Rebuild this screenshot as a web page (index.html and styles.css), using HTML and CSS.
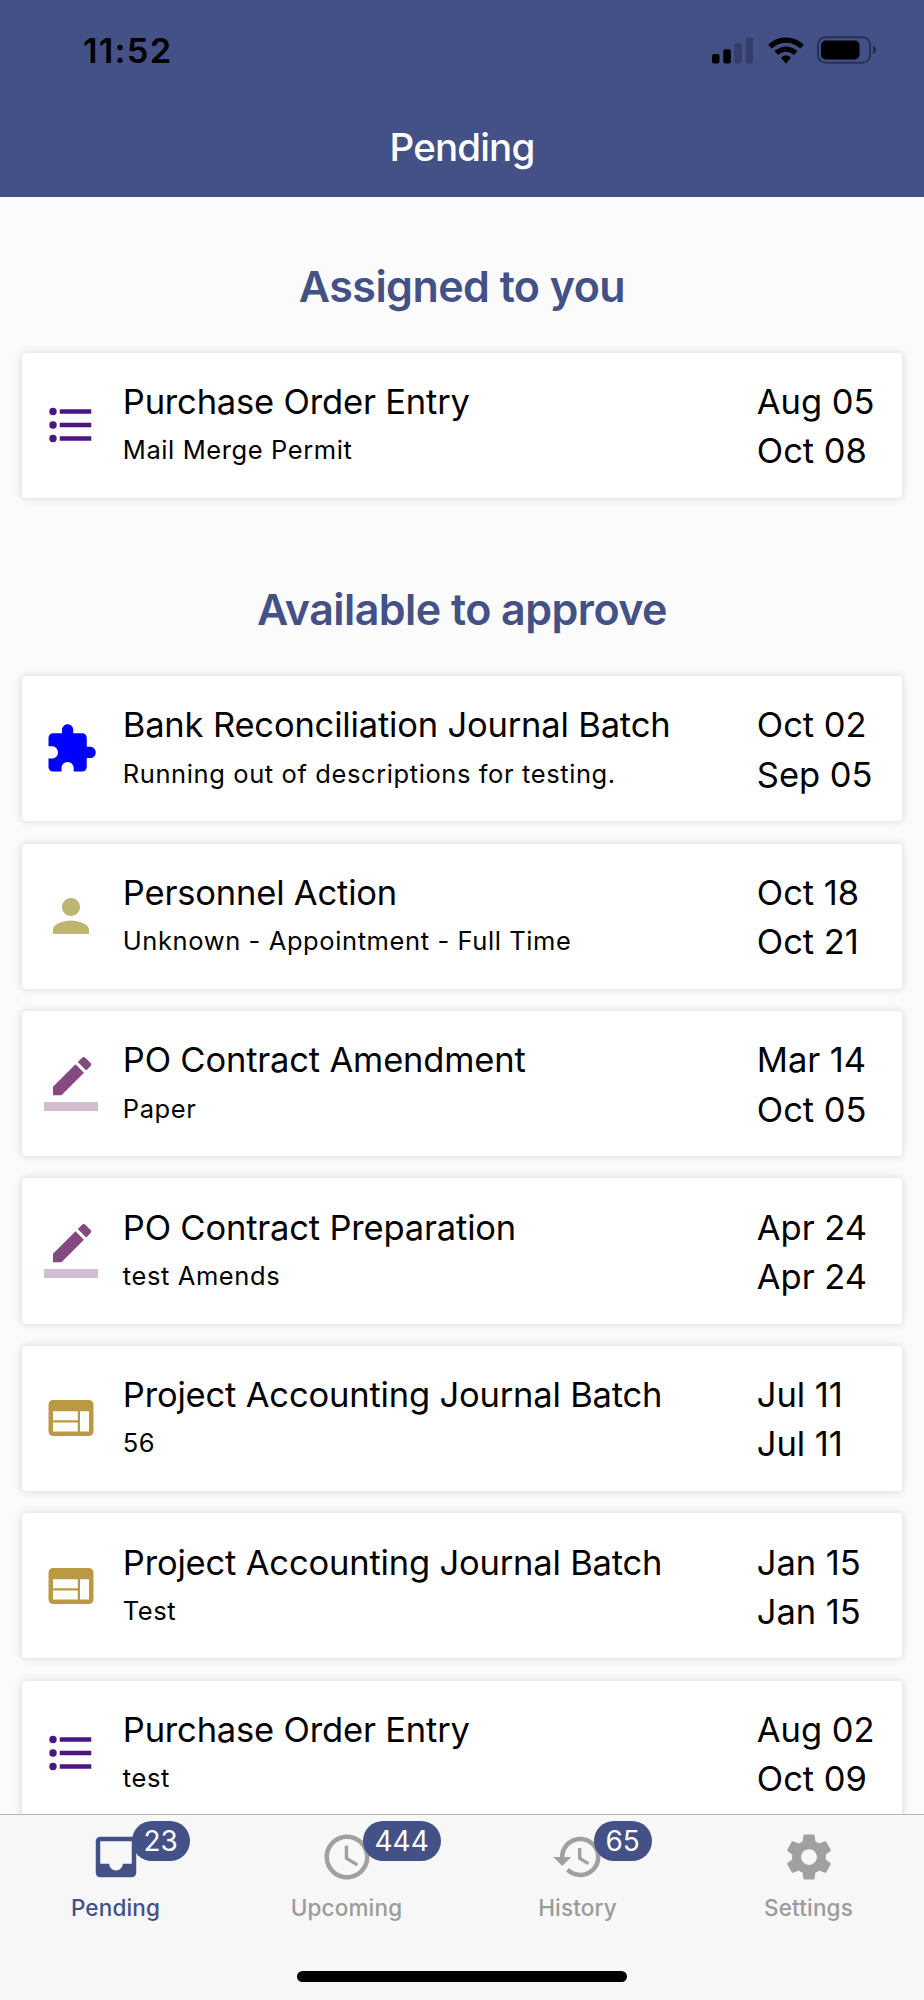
FILE: index.html
```html
<!DOCTYPE html>
<html lang="en">
<head>
<meta charset="utf-8">
<title>Pending</title>
<link rel="stylesheet" href="styles.css">
</head>
<body>
<svg class="sprite" aria-hidden="true">
  <symbol id="list" viewBox="0 0 24 24"><circle cx="4" cy="6" r="1.65"/><circle cx="4" cy="12" r="1.65"/><circle cx="4" cy="18" r="1.65"/><path d="M7 19h14v-2H7v2zm0-6h14v-2H7v2zm0-8v2h14V5H7z"/></symbol>
  <symbol id="puzzle" viewBox="0 0 24 24"><path d="M20.5 11H19V7c0-1.1-.9-2-2-2h-4V3.5C13 2.12 11.88 1 10.5 1S8 2.12 8 3.5V5H4c-1.1 0-1.99.9-1.99 2v3.8H3.5c1.49 0 2.7 1.21 2.7 2.7s-1.21 2.7-2.7 2.7H2V20c0 1.1.9 2 2 2h3.8v-1.5c0-1.49 1.21-2.7 2.7-2.7 1.49 0 2.7 1.21 2.7 2.7V22H17c1.1 0 2-.9 2-2v-4h1.5c1.38 0 2.5-1.12 2.5-2.5S21.88 11 20.5 11z"/></symbol>
  <symbol id="person" viewBox="0 0 24 24"><path d="M12 12c2.21 0 4-1.79 4-4s-1.79-4-4-4-4 1.79-4 4 1.79 4 4 4zm0 2c-2.67 0-8 1.34-8 4v2h16v-2c0-2.66-5.33-4-8-4z"/></symbol>
  <symbol id="pencil" viewBox="0 0 24 24"><path d="M17.75 7L14 3.25l-10 10V17h3.75l10-10zm2.96-2.96c.39-.39.39-1.02 0-1.41L18.37.29c-.39-.39-1.02-.39-1.41 0L15 2.25 18.75 6l1.96-1.96z"/><path fill-opacity=".36" d="M0 20h24v4H0z"/></symbol>
  <symbol id="web" viewBox="0 0 24 24"><path d="M20 4H4c-1.1 0-1.99.9-1.99 2L2 18c0 1.1.9 2 2 2h16c1.1 0 2-.9 2-2V6c0-1.1-.9-2-2-2zm-5 14H4v-4h11v4zm0-5H4V9h11v4zm5 5h-4V9h4v9z"/></symbol>
</svg>
<div class="screen">
  <header class="top">
    <div class="status">
      <span class="time">11:52</span>
      <div class="indicators">
        <svg class="signal" viewBox="0 0 41 27"><rect x="0" y="17" width="7.5" height="9.6" rx="2"/><rect x="11.3" y="12.3" width="7.5" height="14.3" rx="2"/><g opacity=".22"><rect x="22.4" y="6.3" width="7.5" height="20.3" rx="2"/><rect x="33.6" y=".5" width="7.5" height="26.1" rx="2"/></g></svg>
        <svg class="wifi" viewBox="0 0 36 27"><path d="M18 .4c6.7 0 12.8 2.6 17.3 6.8.4.4.4.9 0 1.300l-2.500 2.500c-.4.400-.9.400-1.300 0C27.900 7.700 23.200 5.700 18 5.700S8.100 7.700 4.500 11c-.4.400-.9.400-1.300 0L.7 8.500c-.4-.4-.4-.9 0-1.300C5.200 3 11.300.4 18 .4z"/><path d="M18 9.400c4.200 0 8 1.600 10.900 4.200.4.400.4.900 0 1.300l-2.600 2.500c-.4.400-.8.400-1.200.1-1.900-1.700-4.400-2.700-7.100-2.700s-5.200 1-7.100 2.700c-.4.300-.8.300-1.200-.1l-2.600-2.500c-.4-.4-.4-.9 0-1.300C10 11 13.800 9.400 18 9.400z"/><path d="M18 18.600c1.700 0 3.200.6 4.400 1.500.4.300.4.900.1 1.200l-3.800 4.800c-.4.400-1 .4-1.400 0l-3.800-4.800c-.3-.3-.3-.9.1-1.200 1.200-.9 2.700-1.500 4.400-1.500z"/></svg>
        <svg class="battery" viewBox="0 0 60 28"><rect x="1" y="1.200" width="52" height="25.600" rx="7.500" fill="none" stroke="#000" stroke-opacity=".4" stroke-width="2"/><rect x="4" y="4.600" width="38.500" height="18.800" rx="4.500"/><path opacity=".45" d="M56 9.500c1.900.8 3.100 2.500 3.100 4.500s-1.200 3.700-3.100 4.500z"/></svg>
      </div>
    </div>
    <h1 class="title">Pending</h1>
  </header>
  <main class="content">
    <h2 class="section">Assigned to you</h2>
    <div class="cards">
      <article class="card"><svg class="icon purple"><use href="#list"/></svg><div class="info"><div class="name">Purchase Order Entry</div><div class="desc">Mail Merge Permit</div></div><div class="dates"><div>Aug 05</div><div>Oct 08</div></div></article>
    </div>
    <h2 class="section">Available to approve</h2>
    <div class="cards">
      <article class="card"><svg class="icon blue"><use href="#puzzle"/></svg><div class="info"><div class="name">Bank Reconciliation Journal Batch</div><div class="desc">Running out of descriptions for testing.</div></div><div class="dates"><div>Oct 02</div><div>Sep 05</div></div></article>
      <article class="card"><svg class="icon khaki"><use href="#person"/></svg><div class="info"><div class="name">Personnel Action</div><div class="desc">Unknown - Appointment - Full Time</div></div><div class="dates"><div>Oct 18</div><div>Oct 21</div></div></article>
      <article class="card"><svg class="icon plum"><use href="#pencil"/></svg><div class="info"><div class="name">PO Contract Amendment</div><div class="desc">Paper</div></div><div class="dates"><div>Mar 14</div><div>Oct 05</div></div></article>
      <article class="card"><svg class="icon plum"><use href="#pencil"/></svg><div class="info"><div class="name">PO Contract Preparation</div><div class="desc">test Amends</div></div><div class="dates"><div>Apr 24</div><div>Apr 24</div></div></article>
      <article class="card"><svg class="icon gold"><use href="#web"/></svg><div class="info"><div class="name">Project Accounting Journal Batch</div><div class="desc">56</div></div><div class="dates"><div>Jul 11</div><div>Jul 11</div></div></article>
      <article class="card"><svg class="icon gold"><use href="#web"/></svg><div class="info"><div class="name">Project Accounting Journal Batch</div><div class="desc">Test</div></div><div class="dates"><div>Jan 15</div><div>Jan 15</div></div></article>
      <article class="card"><svg class="icon purple"><use href="#list"/></svg><div class="info"><div class="name">Purchase Order Entry</div><div class="desc">test</div></div><div class="dates"><div>Aug 02</div><div>Oct 09</div></div></article>
    </div>
  </main>
  <footer class="bottom">
    <nav class="tabs">
      <a class="tab active"><span class="glyph"><svg viewBox="0 0 24 24"><path d="M19 3H4.990c-1.110 0-1.980.89-1.980 2L3 19c0 1.100.88 2 1.990 2H19c1.100 0 2-.9 2-2V5c0-1.110-.9-2-2-2zm0 12h-4c0 1.660-1.350 3-3 3s-3-1.340-3-3H4.990V5H19v10z"/></svg><b class="badge">23</b></span><span class="label">Pending</span></a>
      <a class="tab"><span class="glyph"><svg viewBox="0 0 24 24"><path d="M11.990 2C6.470 2 2 6.480 2 12s4.470 10 9.990 10C17.520 22 22 17.520 22 12S17.520 2 11.990 2zM12 20c-4.420 0-8-3.580-8-8s3.580-8 8-8 8 3.580 8 8-3.580 8-8 8zm.5-13H11v6l5.250 3.150.75-1.230-4.500-2.670z"/></svg><b class="badge">444</b></span><span class="label">Upcoming</span></a>
      <a class="tab"><span class="glyph"><svg viewBox="0 0 24 24"><path d="M13 3c-4.970 0-9 4.030-9 9H1l3.890 3.890.07.14L9 12H6c0-3.870 3.130-7 7-7s7 3.130 7 7-3.130 7-7 7c-1.930 0-3.680-.79-4.940-2.060l-1.420 1.420C8.270 19.990 10.510 21 13 21c4.970 0 9-4.030 9-9s-4.030-9-9-9zm-1 5v5l4.280 2.540.72-1.210-3.500-2.080V8H12z"/></svg><b class="badge">65</b></span><span class="label">History</span></a>
      <a class="tab"><span class="glyph"><svg viewBox="0 0 24 24"><path d="M19.430 12.980c.04-.32.07-.64.07-.98s-.03-.66-.07-.98l2.110-1.650c.19-.15.24-.42.12-.64l-2-3.460c-.12-.22-.39-.3-.61-.22l-2.490 1c-.52-.4-1.080-.73-1.690-.98l-.38-2.650C14.460 2.180 14.250 2 14 2h-4c-.25 0-.46.18-.49.42l-.38 2.650c-.61.25-1.170.59-1.690.98l-2.490-1c-.23-.09-.49 0-.61.22l-2 3.460c-.13.22-.07.49.12.64l2.110 1.650c-.04.32-.07.65-.07.98s.03.66.07.98l-2.110 1.650c-.19.15-.24.42-.12.64l2 3.460c.12.22.39.3.61.22l2.490-1c.52.4 1.080.73 1.690.98l.38 2.650c.03.24.24.42.49.42h4c.25 0 .46-.18.49-.42l.38-2.650c.61-.25 1.170-.59 1.690-.98l2.490 1c.23.09.49 0 .61-.22l2-3.460c.12-.22.07-.49-.12-.64l-2.110-1.650zM12 15.500c-1.930 0-3.500-1.570-3.500-3.500s1.570-3.500 3.500-3.500 3.500 1.570 3.500 3.500-1.570 3.500-3.500 3.500z"/></svg></span><span class="label">Settings</span></a>
    </nav>
    <div class="home"></div>
  </footer>
</div>
</body>
</html>
```
FILE: styles.css
```css
* { box-sizing: border-box; }
body { margin: 0; font-family: Inter, "Liberation Sans", sans-serif; color: #000; }
.sprite { display: none; }
.screen { width: 924px; height: 2000px; display: flex; flex-direction: column; overflow: hidden; background: #fbfbfb; }
.top { flex: none; height: 196.5px; background: #435186; }
.status { display: flex; justify-content: space-between; align-items: center; height: 100px; padding: 0 47.500px 0 83px; }
.time { font-size: 34.500px; font-weight: 600; line-height: 42px; margin-top: 2px; letter-spacing: 1.200px; }
.indicators { display: flex; align-items: center; }
.signal { width: 41px; height: 27px; margin-right: 14.500px; }
.wifi { width: 36px; height: 27px; margin-right: 13px; }
.battery { width: 60px; height: 28px; }
.title { margin: 0; color: #fff; font-size: 38.500px; font-weight: 500; line-height: 48px; margin-top: 23px; text-align: center; letter-spacing: -.85px; }
.content { flex: 1; min-height: 0; overflow: hidden; }
.section { margin: 0; height: 156px; padding-top: 58px; color: #435186; text-align: center; font-size: 43px; font-weight: 600; line-height: 62px; letter-spacing: -.55px; }
.cards + .section { height: 178.500px; padding-top: 80.500px; }
.cards { display: flex; flex-direction: column; gap: 22.350px; padding: 0 22.200px; }
.card { flex: none; height: 145.100px; display: flex; align-items: center; background: #fff; border-radius: 4px; padding: 0 0 0 22.200px; box-shadow: 0 0 8px rgba(0, 0, 0, .16); }
.icon { flex: none; width: 54px; height: 54px; fill: currentColor; }
.purple { color: #4b1584; }
.blue { color: #0000fe; }
.khaki { color: #bdb572; }
.plum { color: #834980; }
.gold { color: #b99a42; }
.info { flex: 1; margin-left: 24.400px; padding-top: 2px; white-space: nowrap; }
.name { font-size: 34.500px; line-height: 49.300px; letter-spacing: -.17px; }
.desc { font-size: 25.500px; line-height: 47.300px; height: 49.300px; letter-spacing: .6px; }
.dates { width: 145px; padding-top: 2px; font-size: 34.500px; line-height: 49.300px; white-space: nowrap; }
.dates div { letter-spacing: -.05px; }
.bottom { flex: none; height: 186px; border-top: 1.500px solid #b9b9bb; background: #f7f7f7; display: flex; flex-direction: column; align-items: center; }
.tabs { display: flex; width: 100%; height: 156px; }
.tab { flex: 1; display: flex; flex-direction: column; align-items: center; padding-top: 15px; color: #9b9b9b; }
.glyph { position: relative; width: 54px; height: 54px; }
.glyph svg { display: block; width: 54px; height: 54px; fill: currentColor; }
.tab .glyph svg { color: #a0a0a0; }
.tab.active, .tab.active .glyph svg { color: #435186; }
.badge { position: absolute; left: 43px; top: -9px; height: 40px; padding: 0 12px; border-radius: 20px; background: #435186; color: #fff; font-size: 28px; font-weight: 400; line-height: 40px; }
.label { font-size: 22.500px; font-weight: 500; line-height: 28px; margin-top: 10px; letter-spacing: .15px; }
.home { width: 330px; height: 11px; border-radius: 6px; background: #000; }
```
